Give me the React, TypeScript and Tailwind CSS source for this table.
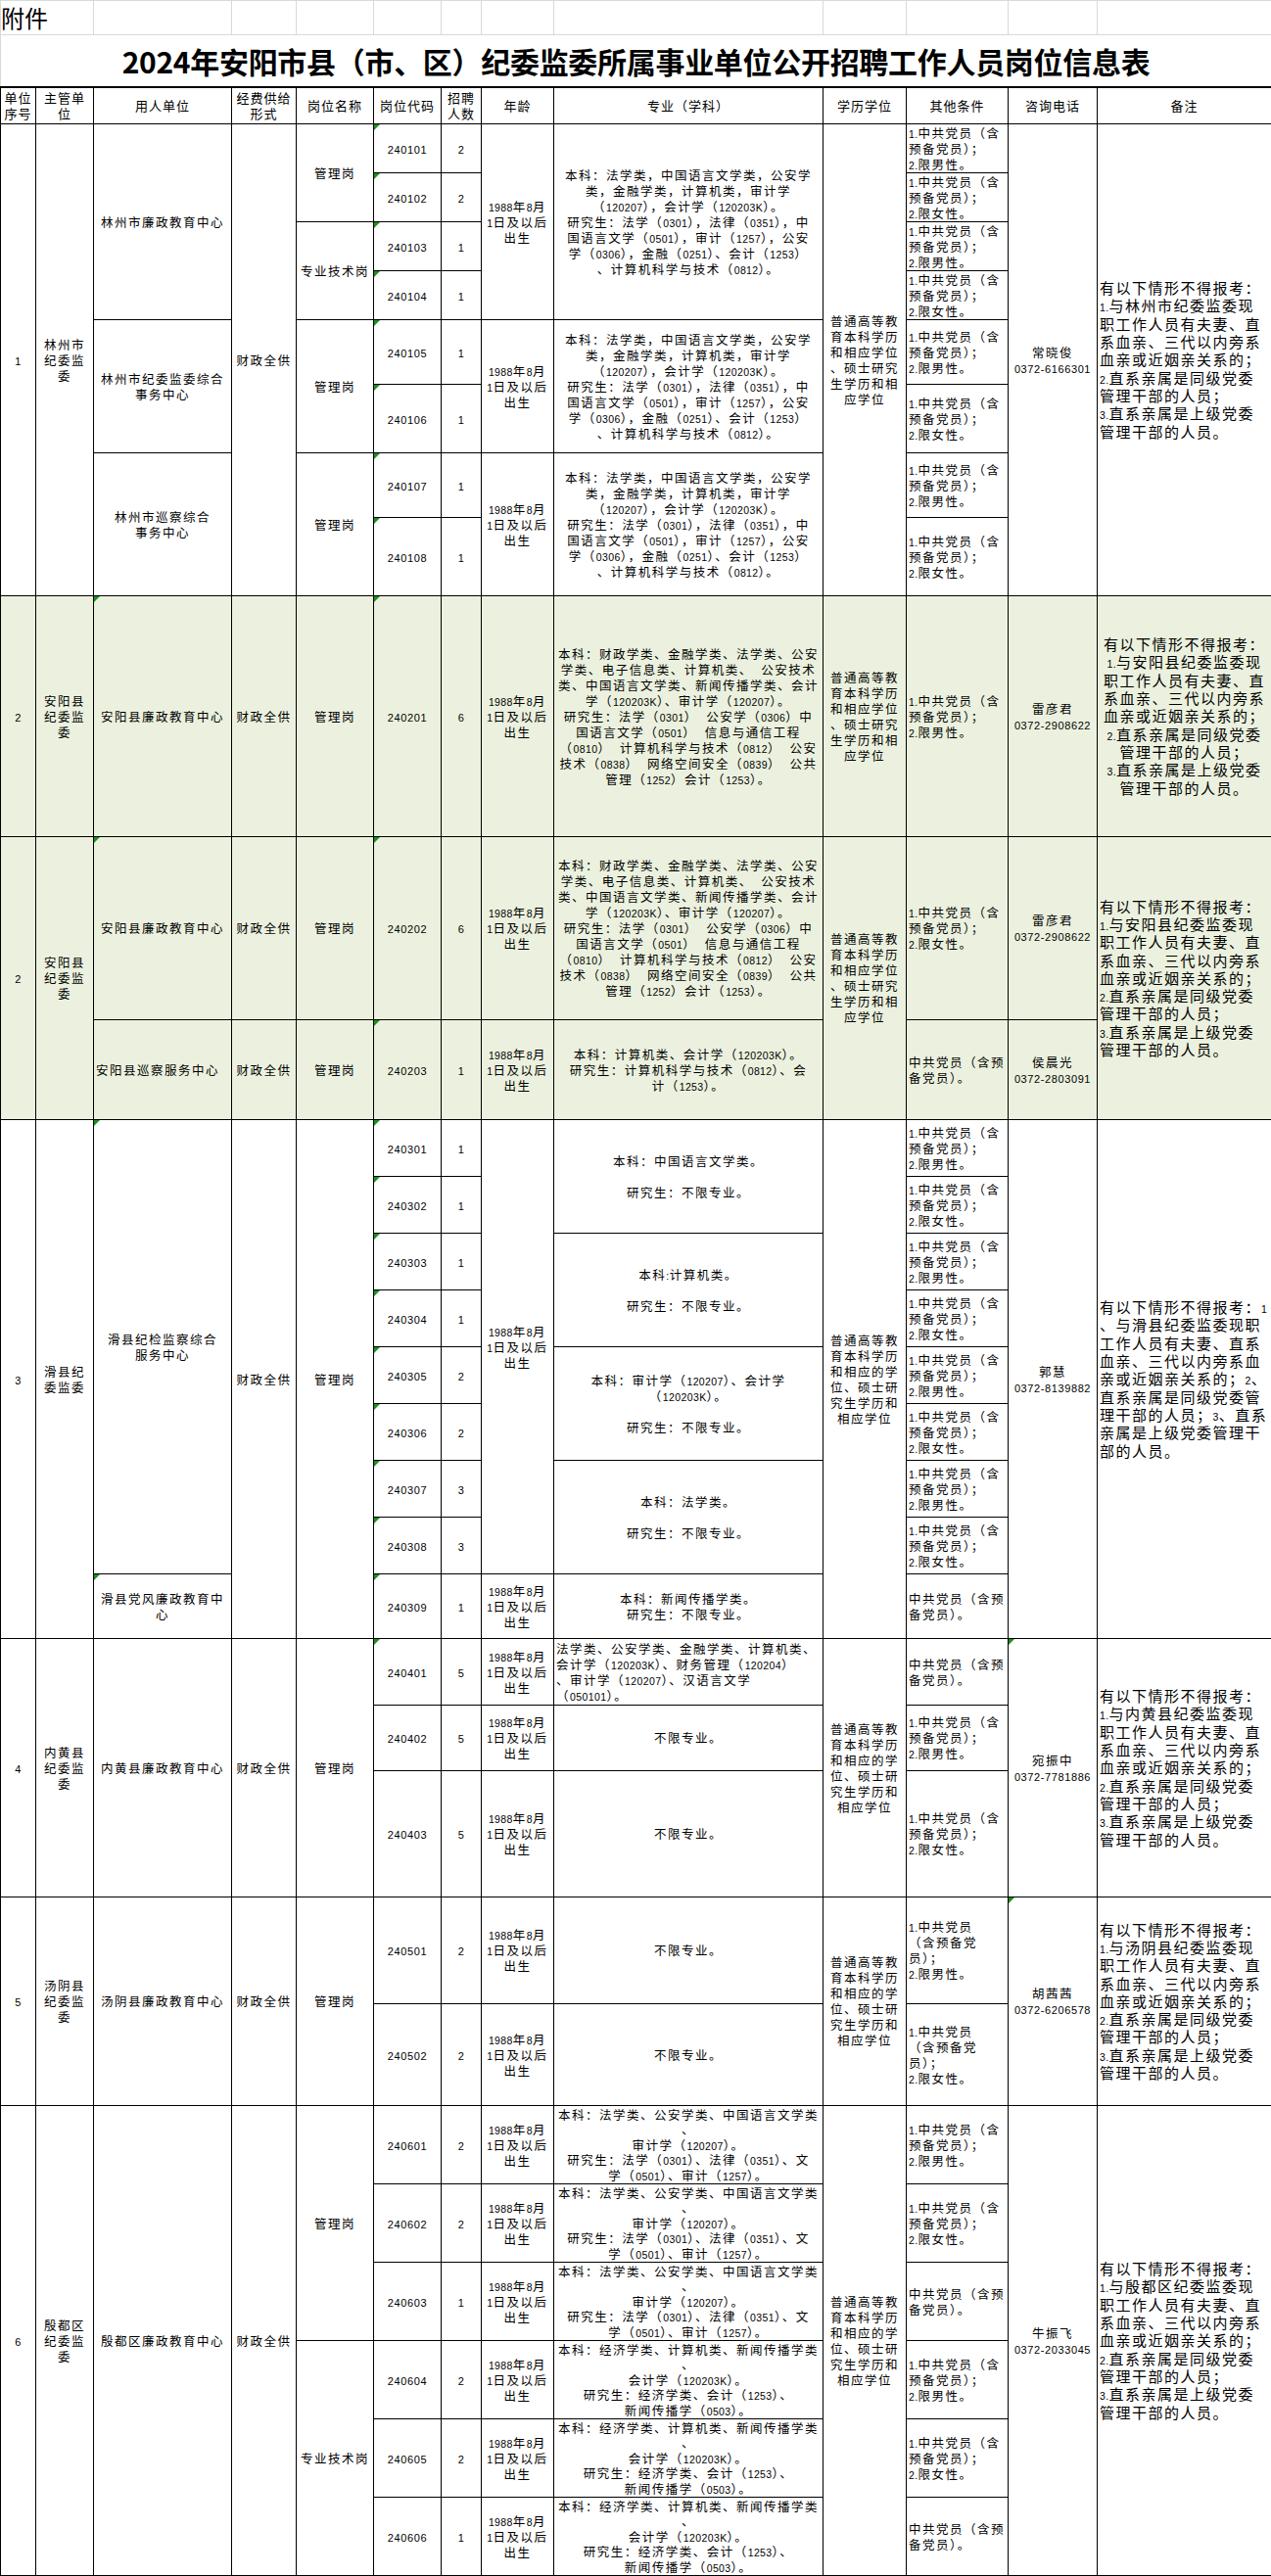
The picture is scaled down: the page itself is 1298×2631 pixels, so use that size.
import React from "react";

const SIZE = {
  body: "text-[12.5px] leading-[16px] tracking-[1.5px]",
  tight: "text-[12.5px] leading-[15.5px] tracking-[1.5px]",
  note: "text-[15px] leading-[18.3px] tracking-[1.5px]",
  head: "text-[13px] leading-[16px] tracking-[1px]",
};
type Size = keyof typeof SIZE;

// ascii runs (digits, codes, phones) get a narrow latin face
function Txt({ s, num }: { s: string; num?: boolean }) {
  const parts = s.split(/([\x21-\x7E]+)/);
  const cls = num
    ? "font-['Liberation_Sans',sans-serif] text-[11px] leading-none tracking-[0.6px]"
    : "font-['Liberation_Sans',sans-serif] text-[10.5px] leading-none tracking-[0.4px]";
  return (
    <>
      {parts.map((p, i) =>
        i % 2 === 1 ? (
          <span key={i} className={cls}>
            {p}
          </span>
        ) : (
          <React.Fragment key={i}>{p}</React.Fragment>
        )
      )}
    </>
  );
}

function Cell({
  text,
  rs,
  cs,
  size = "body",
  left = false,
  mark = false,
  num = false,
}: {
  text: string;
  rs?: number;
  cs?: number;
  size?: Size;
  left?: boolean;
  mark?: boolean;
  num?: boolean;
}) {
  return (
    <td
      rowSpan={rs}
      colSpan={cs}
      className={`relative border border-black px-[2px] py-0 align-middle whitespace-pre ${SIZE[size]} ${
        left ? "text-left" : "text-center"
      }`}
    >
      {mark && (
        <span className="absolute left-0 top-0 h-0 w-0 border-t-[6px] border-r-[6px] border-t-[#1f8f1f] border-r-transparent" />
      )}
      {text.split("\n").map((ln, i) => (
        <div key={i}>{ln === "" ? "\u00a0" : <Txt s={ln} num={num} />}</div>
      ))}
    </td>
  );
}

const LZ = "1988年8月\n1日及以后\n出生";
const XL1 = "普通高等教\n育本科学历\n和相应学位\n、硕士研究\n生学历和相\n应学位";
const XL2 = "普通高等教\n育本科学历\n和相应的学\n位、硕士研\n究生学历和\n相应学位";
const MALE = "1.中共党员（含\n预备党员）；\n2.限男性。";
const FEMALE = "1.中共党员（含\n预备党员）；\n2.限女性。";
const DY = "中共党员（含预\n备党员）。";
const QZ = "财政全供";
const GL = "管理岗";
const ZJ = "专业技术岗";
const BX = "不限专业。";

const bz = (n: string) =>
  `有以下情形不得报考：\n1.与${n}纪委监委现\n职工作人员有夫妻、直\n系血亲、三代以内旁系\n血亲或近姻亲关系的；\n2.直系亲属是同级党委\n管理干部的人员；\n3.直系亲属是上级党委\n管理干部的人员。`;

const BZ_HX =
  "有以下情形不得报考：1\n、与滑县纪委监委现职\n工作人员有夫妻、直系\n血亲、三代以内旁系血\n亲或近姻亲关系的；2、\n直系亲属是同级党委管\n理干部的人员；3、直系\n亲属是上级党委管理干\n部的人员。";

const ZY1 =
  "本科：法学类，中国语言文学类，公安学\n类，金融学类，计算机类，审计学\n（120207），会计学（120203K）。\n研究生：法学（0301），法律（0351），中\n国语言文学（0501），审计（1257），公安\n学（0306），金融（0251）、会计（1253）\n、计算机科学与技术（0812）。";

const ZY2 =
  "本科：财政学类、金融学类、法学类、公安\n学类、电子信息类、计算机类、  公安技术\n类、中国语言文学类、新闻传播学类、会计\n学（120203K）、审计学（120207）。\n研究生：法学（0301）  公安学（0306）中\n国语言文学（0501）  信息与通信工程\n（0810）  计算机科学与技术（0812）  公安\n技术（0838）  网络空间安全（0839）  公共\n管理（1252）会计（1253）。";

const ZY3 = "本科：计算机类、会计学（120203K）。\n研究生：计算机科学与技术（0812）、会\n计（1253）。";

const ZY4 =
  "法学类、公安学类、金融学类、计算机类、\n会计学（120203K）、财务管理（120204）\n、审计学（120207）、汉语言文学\n（050101）。";

const ZY6A =
  "本科：法学类、公安学类、中国语言文学类\n、\n审计学（120207）。\n研究生：法学（0301）、法律（0351）、文\n学（0501）、审计（1257）。";
const ZY6B =
  "本科：经济学类、计算机类、新闻传播学类\n、\n会计学（120203K）。\n研究生：经济学类、会计（1253）、\n新闻传播学（0503）。";

const TY_M = "1.中共党员\n（含预备党\n员）；\n2.限男性。";
const TY_F = "1.中共党员\n（含预备党\n员）；\n2.限女性。";

const HEAD = [
  "单位\n序号",
  "主管单\n位",
  "用人单位",
  "经费供给\n形式",
  "岗位名称",
  "岗位代码",
  "招聘\n人数",
  "年龄",
  "专业（学科）",
  "学历学位",
  "其他条件",
  "咨询电话",
  "备注",
];

const COLS = [
  "w-[36px]",
  "w-[59px]",
  "w-[141px]",
  "w-[66px]",
  "w-[79px]",
  "w-[69px]",
  "w-[41px]",
  "w-[74px]",
  "w-[275px]",
  "w-[85px]",
  "w-[104px]",
  "w-[91px]",
  "w-[178px]",
];

export default function App() {
  return (
    <div className="w-[1298px] bg-white text-black font-['Noto_Sans_CJK_SC',sans-serif]">
      <table className="w-[1298px] table-fixed border-collapse">
        <colgroup>
          {COLS.map((c, i) => (
            <col key={i} className={c} />
          ))}
        </colgroup>
        <tbody>
          {/* sheet heading rows */}
          <tr className="h-[35px]">
            <td
              colSpan={2}
              className="border border-[#d9d9d9] pl-0 text-left align-middle text-[24px] leading-[28px] whitespace-nowrap"
            >
              附件
            </td>
            {Array.from({ length: 11 }).map((_, i) => (
              <td key={i} className="border border-[#d9d9d9]" />
            ))}
          </tr>
          <tr className="h-[53px]">
            <td
              colSpan={13}
              className="border border-[#d9d9d9] text-center align-middle text-[30px] font-bold leading-[36px] tracking-[-0.3px]"
            >
              2024年安阳市县（市、区）纪委监委所属事业单位公开招聘工作人员岗位信息表
            </td>
          </tr>
          <tr className="h-[38px]">
            {HEAD.map((h, i) => (
              <td
                key={i}
                className={`border border-black border-t-2 px-[1px] text-center align-middle whitespace-pre ${SIZE.head}`}
              >
                {h.split("\n").map((ln, j) => (
                  <div key={j}>{ln}</div>
                ))}
              </td>
            ))}
          </tr>

          {/* 1 林州市 */}
          <tr className="h-[50px]">
            <Cell rs={8} text="1" num />
            <Cell rs={8} text={"林州市\n纪委监\n委"} />
            <Cell rs={4} text="林州市廉政教育中心" />
            <Cell rs={8} text={QZ} />
            <Cell rs={2} text={GL} />
            <Cell text="240101" mark num />
            <Cell text="2" num />
            <Cell rs={4} text={LZ} />
            <Cell rs={4} text={ZY1} />
            <Cell rs={8} text={XL1} />
            <Cell text={MALE} left />
            <Cell rs={8} text={"常晓俊\n0372-6166301"} num />
            <Cell rs={8} text={bz("林州市")} size="note" left />
          </tr>
          <tr className="h-[50px]">
            <Cell text="240102" mark num />
            <Cell text="2" num />
            <Cell text={FEMALE} left />
          </tr>
          <tr className="h-[50px]">
            <Cell rs={2} text={ZJ} />
            <Cell text="240103" mark num />
            <Cell text="1" num />
            <Cell text={MALE} left />
          </tr>
          <tr className="h-[50px]">
            <Cell text="240104" mark num />
            <Cell text="1" num />
            <Cell text={FEMALE} left />
          </tr>
          <tr className="h-[66px]">
            <Cell rs={2} text={"林州市纪委监委综合\n事务中心"} />
            <Cell rs={2} text={GL} />
            <Cell text="240105" mark num />
            <Cell text="1" num />
            <Cell rs={2} text={LZ} />
            <Cell rs={2} text={ZY1} />
            <Cell text={MALE} left />
          </tr>
          <tr className="h-[70px]">
            <Cell text="240106" mark num />
            <Cell text="1" num />
            <Cell text={FEMALE} left />
          </tr>
          <tr className="h-[66px]">
            <Cell rs={2} text={"林州市巡察综合\n事务中心"} />
            <Cell rs={2} text={GL} />
            <Cell text="240107" mark num />
            <Cell text="1" num />
            <Cell rs={2} text={LZ} />
            <Cell rs={2} text={ZY1} />
            <Cell text={MALE} left />
          </tr>
          <tr className="h-[80px]">
            <Cell text="240108" mark num />
            <Cell text="1" num />
            <Cell text={FEMALE} left />
          </tr>

          {/* 2 安阳县 */}
          <tr className="h-[246px] bg-[#ebf1de]">
            <Cell text="2" num />
            <Cell text={"安阳县\n纪委监\n委"} />
            <Cell text="安阳县廉政教育中心" mark />
            <Cell text={QZ} />
            <Cell text={GL} />
            <Cell text="240201" mark num />
            <Cell text="6" num />
            <Cell text={LZ} />
            <Cell text={ZY2} />
            <Cell text={XL1} />
            <Cell text={MALE} left />
            <Cell text={"雷彦君\n0372-2908622"} num />
            <Cell text={bz("安阳县")} size="note" />
          </tr>
          <tr className="h-[187px] bg-[#ebf1de]">
            <Cell rs={2} text="2" num />
            <Cell rs={2} text={"安阳县\n纪委监\n委"} />
            <Cell text="安阳县廉政教育中心" mark />
            <Cell text={QZ} />
            <Cell text={GL} />
            <Cell text="240202" mark num />
            <Cell text="6" num />
            <Cell text={LZ} />
            <Cell text={ZY2} />
            <Cell rs={2} text={XL1} />
            <Cell text={FEMALE} left />
            <Cell text={"雷彦君\n0372-2908622"} num />
            <Cell rs={2} text={bz("安阳县")} size="note" left />
          </tr>
          <tr className="h-[102px] bg-[#ebf1de]">
            <Cell text="安阳县巡察服务中心" left />
            <Cell text={QZ} />
            <Cell text={GL} />
            <Cell text="240203" mark num />
            <Cell text="1" num />
            <Cell text={LZ} />
            <Cell text={ZY3} />
            <Cell text={DY} left />
            <Cell text={"侯晨光\n0372-2803091"} num />
          </tr>

          {/* 3 滑县 */}
          <tr className="h-[58px]">
            <Cell rs={9} text="3" num />
            <Cell rs={9} text={"滑县纪\n委监委"} />
            <Cell rs={8} text={"滑县纪检监察综合\n服务中心"} mark />
            <Cell rs={9} text={QZ} />
            <Cell rs={9} text={GL} />
            <Cell text="240301" mark num />
            <Cell text="1" num />
            <Cell rs={8} text={LZ} />
            <Cell rs={2} text={"本科：中国语言文学类。\n\n研究生：不限专业。"} />
            <Cell rs={9} text={XL2} />
            <Cell text={MALE} left />
            <Cell rs={9} text={"郭慧\n0372-8139882"} num />
            <Cell rs={9} text={BZ_HX} size="note" left />
          </tr>
          <tr className="h-[58px]">
            <Cell text="240302" mark num />
            <Cell text="1" num />
            <Cell text={FEMALE} left />
          </tr>
          <tr className="h-[58px]">
            <Cell text="240303" mark num />
            <Cell text="1" num />
            <Cell rs={2} text={"本科:计算机类。\n\n研究生：不限专业。"} />
            <Cell text={MALE} left />
          </tr>
          <tr className="h-[58px]">
            <Cell text="240304" mark num />
            <Cell text="1" num />
            <Cell text={FEMALE} left />
          </tr>
          <tr className="h-[58px]">
            <Cell text="240305" mark num />
            <Cell text="2" num />
            <Cell rs={2} text={"本科：审计学（120207）、会计学\n（120203K）。\n\n研究生：不限专业。"} />
            <Cell text={MALE} left />
          </tr>
          <tr className="h-[58px]">
            <Cell text="240306" mark num />
            <Cell text="2" num />
            <Cell text={FEMALE} left />
          </tr>
          <tr className="h-[58px]">
            <Cell text="240307" mark num />
            <Cell text="3" num />
            <Cell rs={2} text={"本科：法学类。\n\n研究生：不限专业。"} />
            <Cell text={MALE} left />
          </tr>
          <tr className="h-[58px]">
            <Cell text="240308" mark num />
            <Cell text="3" num />
            <Cell text={FEMALE} left />
          </tr>
          <tr className="h-[66px]">
            <Cell text={"滑县党风廉政教育中\n心"} mark />
            <Cell text="240309" mark num />
            <Cell text="1" num />
            <Cell text={LZ} />
            <Cell text={"本科：新闻传播学类。\n研究生：不限专业。"} />
            <Cell text={DY} left />
          </tr>

          {/* 4 内黄县 */}
          <tr className="h-[68px]">
            <Cell rs={3} text="4" num />
            <Cell rs={3} text={"内黄县\n纪委监\n委"} />
            <Cell rs={3} text="内黄县廉政教育中心" />
            <Cell rs={3} text={QZ} />
            <Cell rs={3} text={GL} />
            <Cell text="240401" mark num />
            <Cell text="5" num />
            <Cell text={LZ} />
            <Cell text={ZY4} left />
            <Cell rs={3} text={XL2} />
            <Cell text={DY} left />
            <Cell rs={3} text={"宛振中\n0372-7781886"} mark num />
            <Cell rs={3} text={bz("内黄县")} size="note" left />
          </tr>
          <tr className="h-[67px]">
            <Cell text="240402" num />
            <Cell text="5" num />
            <Cell text={LZ} />
            <Cell text={BX} />
            <Cell text={MALE} left />
          </tr>
          <tr className="h-[129px]">
            <Cell text="240403" num />
            <Cell text="5" num />
            <Cell text={LZ} />
            <Cell text={BX} />
            <Cell text={FEMALE} left />
          </tr>

          {/* 5 汤阴县 */}
          <tr className="h-[109px]">
            <Cell rs={2} text="5" num />
            <Cell rs={2} text={"汤阴县\n纪委监\n委"} />
            <Cell rs={2} text="汤阴县廉政教育中心" />
            <Cell rs={2} text={QZ} />
            <Cell rs={2} text={GL} />
            <Cell text="240501" num />
            <Cell text="2" num />
            <Cell text={LZ} />
            <Cell text={BX} />
            <Cell rs={2} text={XL2} />
            <Cell text={TY_M} left />
            <Cell rs={2} text={"胡茜茜\n0372-6206578"} mark num />
            <Cell rs={2} text={bz("汤阴县")} size="note" left />
          </tr>
          <tr className="h-[104px]">
            <Cell text="240502" num />
            <Cell text="2" num />
            <Cell text={LZ} />
            <Cell text={BX} />
            <Cell text={TY_F} left />
          </tr>

          {/* 6 殷都区 */}
          <tr className="h-[80px]">
            <Cell rs={6} text="6" num />
            <Cell rs={6} text={"殷都区\n纪委监\n委"} />
            <Cell rs={6} text="殷都区廉政教育中心" />
            <Cell rs={6} text={QZ} />
            <Cell rs={3} text={GL} />
            <Cell text="240601" num />
            <Cell text="2" num />
            <Cell text={LZ} />
            <Cell text={ZY6A} size="tight" />
            <Cell rs={6} text={XL2} />
            <Cell text={MALE} left />
            <Cell rs={6} text={"牛振飞\n0372-2033045"} num />
            <Cell rs={6} text={bz("殷都区")} size="note" left />
          </tr>
          <tr className="h-[80px]">
            <Cell text="240602" num />
            <Cell text="2" num />
            <Cell text={LZ} />
            <Cell text={ZY6A} size="tight" />
            <Cell text={FEMALE} left />
          </tr>
          <tr className="h-[80px]">
            <Cell text="240603" num />
            <Cell text="1" num />
            <Cell text={LZ} />
            <Cell text={ZY6A} size="tight" />
            <Cell text={DY} left />
          </tr>
          <tr className="h-[80px]">
            <Cell rs={3} text={ZJ} />
            <Cell text="240604" num />
            <Cell text="2" num />
            <Cell text={LZ} />
            <Cell text={ZY6B} size="tight" />
            <Cell text={MALE} left />
          </tr>
          <tr className="h-[80px]">
            <Cell text="240605" num />
            <Cell text="2" num />
            <Cell text={LZ} />
            <Cell text={ZY6B} size="tight" />
            <Cell text={FEMALE} left />
          </tr>
          <tr className="h-[80px]">
            <Cell text="240606" num />
            <Cell text="1" num />
            <Cell text={LZ} />
            <Cell text={ZY6B} size="tight" />
            <Cell text={DY} left />
          </tr>
        </tbody>
      </table>
    </div>
  );
}
